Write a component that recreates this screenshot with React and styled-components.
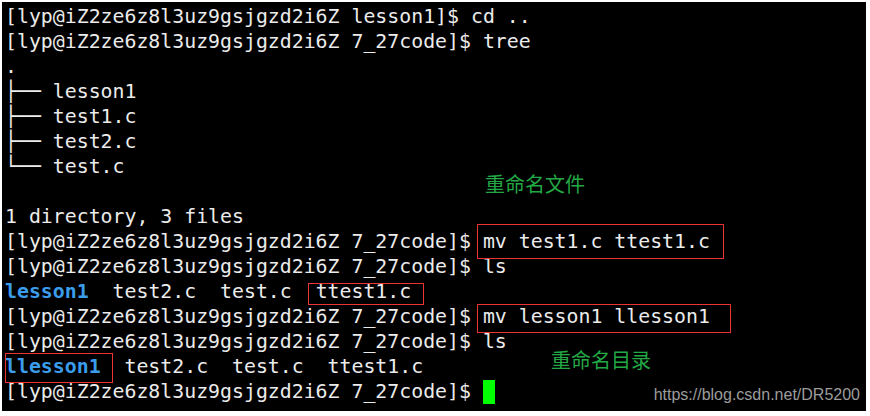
import React from 'react';
import styled, { createGlobalStyle } from 'styled-components';

const Global = createGlobalStyle`
  html, body { margin: 0; padding: 0; background: #ffffff; }
`;

const Page = styled.div`
  padding: 2px;
  width: 870px;
  height: 416px;
  box-sizing: border-box;
`;

const Terminal = styled.div`
  position: relative;
  display: flex;
  flex-direction: column;
  width: 864px;
  height: 409px;
  background: #000000;
  box-sizing: border-box;
  padding: 2px 0 0 3px;
  font-family: "DejaVu Sans Mono", "Liberation Mono", monospace;
  font-size: 19.85px;
  line-height: 25px;
  color: #ebebeb;
  overflow: hidden;
`;

const Line = styled.div`
  height: 25px;
  white-space: pre;
`;

const Dir = styled.span`
  color: #3b9ceb;
  font-weight: bold;
`;

const Cursor = styled.span`
  display: inline-block;
  width: 12px;
  height: 24px;
  background: #00ff00;
  vertical-align: -6px;
`;

const Mark = styled.div`
  position: absolute;
  border: 1px solid #ec3434;
  box-sizing: border-box;
`;

const Note = styled.div`
  position: absolute;
  font-family: "Noto Sans CJK SC", sans-serif;
  font-size: 20px;
  line-height: 20px;
  color: #22a844;
  white-space: nowrap;
`;

const Watermark = styled.div`
  position: absolute;
  right: 6px;
  bottom: 4px;
  font-family: "Liberation Sans", Arial, sans-serif;
  font-size: 16px;
  color: #9c9c9c;
`;

const prompt = '[lyp@iZ2ze6z8l3uz9gsjgzd2i6Z 7_27code]$ ';

export default function App() {
  return (
    <Page>
      <Global />
      <Terminal>
        <Line>[lyp@iZ2ze6z8l3uz9gsjgzd2i6Z lesson1]$ cd ..</Line>
        <Line>{prompt}tree</Line>
        <Line>.</Line>
        <Line>├── lesson1</Line>
        <Line>├── test1.c</Line>
        <Line>├── test2.c</Line>
        <Line>└── test.c</Line>
        <Line> </Line>
        <Line>1 directory, 3 files</Line>
        <Line>{prompt}mv test1.c ttest1.c</Line>
        <Line>{prompt}ls</Line>
        <Line><Dir>lesson1</Dir>  test2.c  test.c  ttest1.c</Line>
        <Line>{prompt}mv lesson1 llesson1</Line>
        <Line>{prompt}ls</Line>
        <Line><Dir>llesson1</Dir>  test2.c  test.c  ttest1.c</Line>
        <Line>{prompt}<Cursor /></Line>

        <Mark style={{ left: 475, top: 222, width: 247, height: 35 }} />
        <Mark style={{ left: 306, top: 281, width: 116, height: 22 }} />
        <Mark style={{ left: 475, top: 302, width: 254, height: 29 }} />
        <Mark style={{ left: 3, top: 351, width: 108, height: 30 }} />

        <Note style={{ left: 483, top: 172 }}>重命名文件</Note>
        <Note style={{ left: 549, top: 348 }}>重命名目录</Note>
        <Watermark>https://blog.csdn.net/DR5200</Watermark>
      </Terminal>
    </Page>
  );
}
